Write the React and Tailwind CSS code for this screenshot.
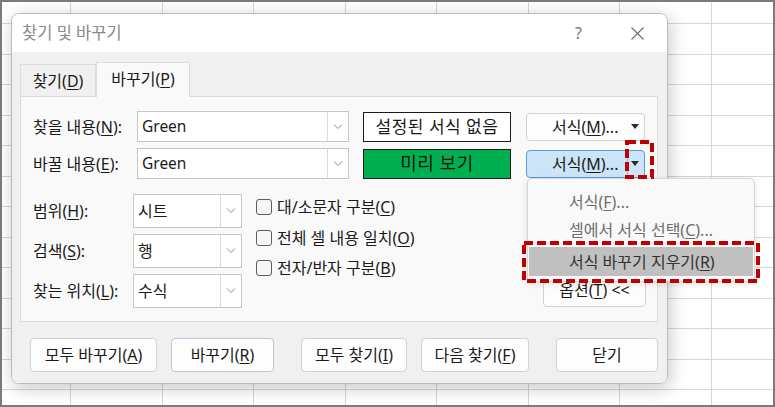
import React from 'react';

const U = ({ children }) => <u className="underline underline-offset-[2px] decoration-1">{children}</u>;

const Chevron = () => (
  <svg width="10" height="6" viewBox="0 0 10 6">
    <path d="M1 0.5l4 4 4-4" fill="none" stroke="#8a8a8a" strokeWidth="1" />
  </svg>
);

const Caret = () => (
  <svg width="8" height="5" viewBox="0 0 8 5">
    <path d="M0 0h8L4 5z" fill="#2b2b2b" />
  </svg>
);

const SheetGrid = () => {
  const xs = Array.from({ length: 8 }, (_, i) => Math.round(70 + 91.5 * i) + 0.5);
  const ys = Array.from({ length: 13 }, (_, i) => Math.round(23 + 30.5 * i) + 0.5);
  return (
    <svg className="absolute inset-0" width="775" height="407">
      {xs.map((x) => (
        <line key={'x' + x} x1={x} y1="0" x2={x} y2="407" stroke="#d6d6d6" />
      ))}
      {ys.map((y) => (
        <line key={'y' + y} x1="0" y1={y} x2="775" y2={y} stroke="#d6d6d6" />
      ))}
    </svg>
  );
};

const TextInput = ({ value }) => (
  <div className="w-[212px] h-[31px] flex bg-white border border-[#c6c6c6]">
    <div className="flex-1 flex items-center pl-[4px] text-[15.5px] text-[#1a1a1a]">{value}</div>
    <div className="w-[21px] flex items-center justify-center border-l border-[#dadada]">
      <Chevron />
    </div>
  </div>
);

const Select = ({ value }) => (
  <div className="w-[109px] h-[34px] flex bg-white border border-[#c6c6c6]">
    <div className="flex-1 flex items-center pl-[4px] text-[16px] text-[#1a1a1a]">{value}</div>
    <div className="w-[21px] flex items-center justify-center border-l border-[#dadada]">
      <Chevron />
    </div>
  </div>
);

const Check = ({ children }) => (
  <div className="h-[30.5px] flex items-start">
    <div className="w-[16px] h-[16px] rounded-[3px] border border-[#5c5c5c] bg-[#f6f6f6]" />
    <span className="ml-[5px] -mt-[3px] text-[16px] text-[#1a1a1a] leading-[22px]">{children}</span>
  </div>
);

const Btn = ({ w, children, blue }) => (
  <div
    className={
      'h-[34px] flex items-center justify-center rounded-[4px] bg-[#fdfdfd] text-[16px] text-[#1a1a1a] border ' +
      (blue ? 'border-[#b9c8d8]' : 'border-[#d2d2d2]')
    }
    style={{ width: w }}
  >
    {children}
  </div>
);

const Dashed = ({ x, y, w, h }) => (
  <svg className="absolute" style={{ left: x, top: y }} width={w} height={h}>
    <rect x="2" y="2" width={w - 4} height={h - 4} fill="none" stroke="#c00000" strokeWidth="4" strokeDasharray="9 4" />
  </svg>
);

export default function App() {
  return (
    <div className="relative w-[775px] h-[407px] overflow-hidden bg-white font-['Noto_Sans','Noto_Sans_CJK_KR',sans-serif]">
      <SheetGrid />

      {/* dialog */}
      <div className="absolute left-[11px] top-[13px] w-[657px] h-[371px] flex flex-col rounded-[8px] border border-[#bcbcbc] overflow-hidden shadow-[2px_4px_18px_rgba(0,0,0,0.22)]">
        <div className="h-[38px] bg-white flex items-center pl-[10px] pr-[23px]">
          <span className="text-[16.5px] text-[#8a8a8a]">찾기 및 바꾸기</span>
          <span className="ml-auto text-[16px] text-[#7a7a7a]">?</span>
          <svg className="ml-[49px]" width="13" height="13" viewBox="0 0 13 13">
            <path d="M0.5 0.5l12 12M12.5 0.5l-12 12" stroke="#6e6e6e" strokeWidth="1.1" />
          </svg>
        </div>

        <div className="flex-1 bg-[#f0f0f0] pl-[8px] pr-[9px] pt-[10px] flex flex-col">
          {/* tabs */}
          <div className="flex items-end h-[34px]">
            <div className="w-[76px] h-[32px] flex items-center justify-center border border-b-0 border-[#dcdcdc] bg-[#f0f0f0] text-[16px] text-[#1a1a1a]">
              찾기(<U>D</U>)
            </div>
            <div className="relative z-10 -mb-px w-[94px] h-[35px] flex items-center justify-center border border-b-0 border-[#dcdcdc] bg-[#f9f9f9] text-[16px] text-[#1a1a1a] pb-[3px]">
              바꾸기(<U>P</U>)
            </div>
          </div>

          {/* panel */}
          <div className="h-[226px] border border-[#dcdcdc] bg-[#f9f9f9] pl-[12px] pr-[11px] pt-[14px] flex flex-col">
            <div className="flex flex-col gap-[6px]">
              <div className="h-[31px] flex items-center">
                <div className="w-[104px] text-[16px] text-[#1a1a1a]">찾을 내용(<U>N</U>):</div>
                <TextInput value="Green" />
                <div className="ml-[14px] w-[148px] h-[30px] flex items-center justify-center bg-white border-[1.5px] border-[#1a1a1a] text-[17px] tracking-[0.5px] text-[#1a1a1a]">
                  설정된 서식 없음
                </div>
                <div className="ml-[15px] w-[119px] h-[28px] flex items-center rounded-[4px] bg-[#fdfdfd] border border-[#d2d2d2] text-[16px] text-[#1a1a1a]">
                  <span className="pl-[25px]">서식(<U>M</U>)...</span>
                  <span className="ml-auto mr-[5px] flex"><Caret /></span>
                </div>
              </div>
              <div className="h-[31px] flex items-center">
                <div className="w-[104px] text-[16px] text-[#1a1a1a]">바꿀 내용(<U>E</U>):</div>
                <TextInput value="Green" />
                <div className="ml-[14px] w-[148px] h-[30px] flex items-center justify-center bg-[#00b050] border-[1.5px] border-[#1a1a1a] text-[18px] tracking-[0.5px] text-[#111]">
                  미리 보기
                </div>
                <div className="ml-[15px] w-[119px] h-[28px] flex items-center rounded-[4px] bg-[#cce4f7] border border-[#5b9bd5] text-[16px] text-[#1a1a1a]">
                  <span className="pl-[25px]">서식(<U>M</U>)...</span>
                  <span className="ml-auto w-px h-[22px] bg-[#9fb9d2]" />
                  <span className="ml-[3px] mr-[5px] flex"><Caret /></span>
                </div>
              </div>
            </div>

            <div className="mt-[15px] flex">
              <div className="flex flex-col gap-[6px]">
                <div className="flex items-center">
                  <div className="w-[100px] text-[16px] text-[#1a1a1a]">범위(<U>H</U>):</div>
                  <Select value="시트" />
                </div>
                <div className="flex items-center">
                  <div className="w-[100px] text-[16px] text-[#1a1a1a]">검색(<U>S</U>):</div>
                  <Select value="행" />
                </div>
                <div className="flex items-center">
                  <div className="w-[100px] text-[16px] text-[#1a1a1a]">찾는 위치(<U>L</U>):</div>
                  <Select value="수식" />
                </div>
              </div>
              <div className="ml-[14px] pt-[5px] flex flex-col">
                <Check>대/소문자 구분(<U>C</U>)</Check>
                <Check>전체 셀 내용 일치(<U>O</U>)</Check>
                <Check>전자/반자 구분(<U>B</U>)</Check>
              </div>
              <div className="ml-auto self-end mb-px w-[103px] h-[30px] pb-[5px] flex items-center justify-center rounded-[4px] bg-[#fdfdfd] border border-[#d2d2d2] text-[16px] text-[#1a1a1a]">
                옵션(<U>T</U>) &lt;&lt;
              </div>
            </div>
          </div>

          {/* bottom buttons */}
          <div className="mt-[16px] ml-[10px] flex">
            <Btn w={127}>모두 바꾸기(<U>A</U>)</Btn>
            <div className="ml-[14px]"><Btn w={103} blue>바꾸기(<U>R</U>)</Btn></div>
            <div className="ml-[27px]"><Btn w={106}>모두 찾기(<U>I</U>)</Btn></div>
            <div className="ml-[14px]"><Btn w={108}>다음 찾기(<U>F</U>)</Btn></div>
            <div className="ml-[27px]"><Btn w={102}>닫기</Btn></div>
          </div>
        </div>
      </div>

      {/* dropdown menu */}
      <div className="absolute left-[527px] top-[178px] w-[228px] h-[104px] rounded-[5px] bg-[#f9f9f9] border border-[#d6d6d6] shadow-[0_2px_6px_rgba(0,0,0,0.12)] px-px pt-[9px] flex flex-col">
        <div className="h-[28px] flex items-center pl-[40px] text-[16px] text-[#6d6d6d]">서식(<U>F</U>)...</div>
        <div className="h-[28px] flex items-center pl-[40px] text-[16px] text-[#6d6d6d]">셀에서 서식 선택(<U>C</U>)...</div>
        <div className="mt-[3px] h-[29px] flex items-center pl-[40px] bg-[#c0c0c0] text-[16px] text-[#333]">서식 바꾸기 지우기(<U>R</U>)</div>
      </div>

      <Dashed x={625} y={140} w={29} h={39} />
      <Dashed x={522} y={241} w={238} h={42} />

      <div className="absolute inset-0 border-2 border-[#7b7b7b] pointer-events-none" />
    </div>
  );
}
